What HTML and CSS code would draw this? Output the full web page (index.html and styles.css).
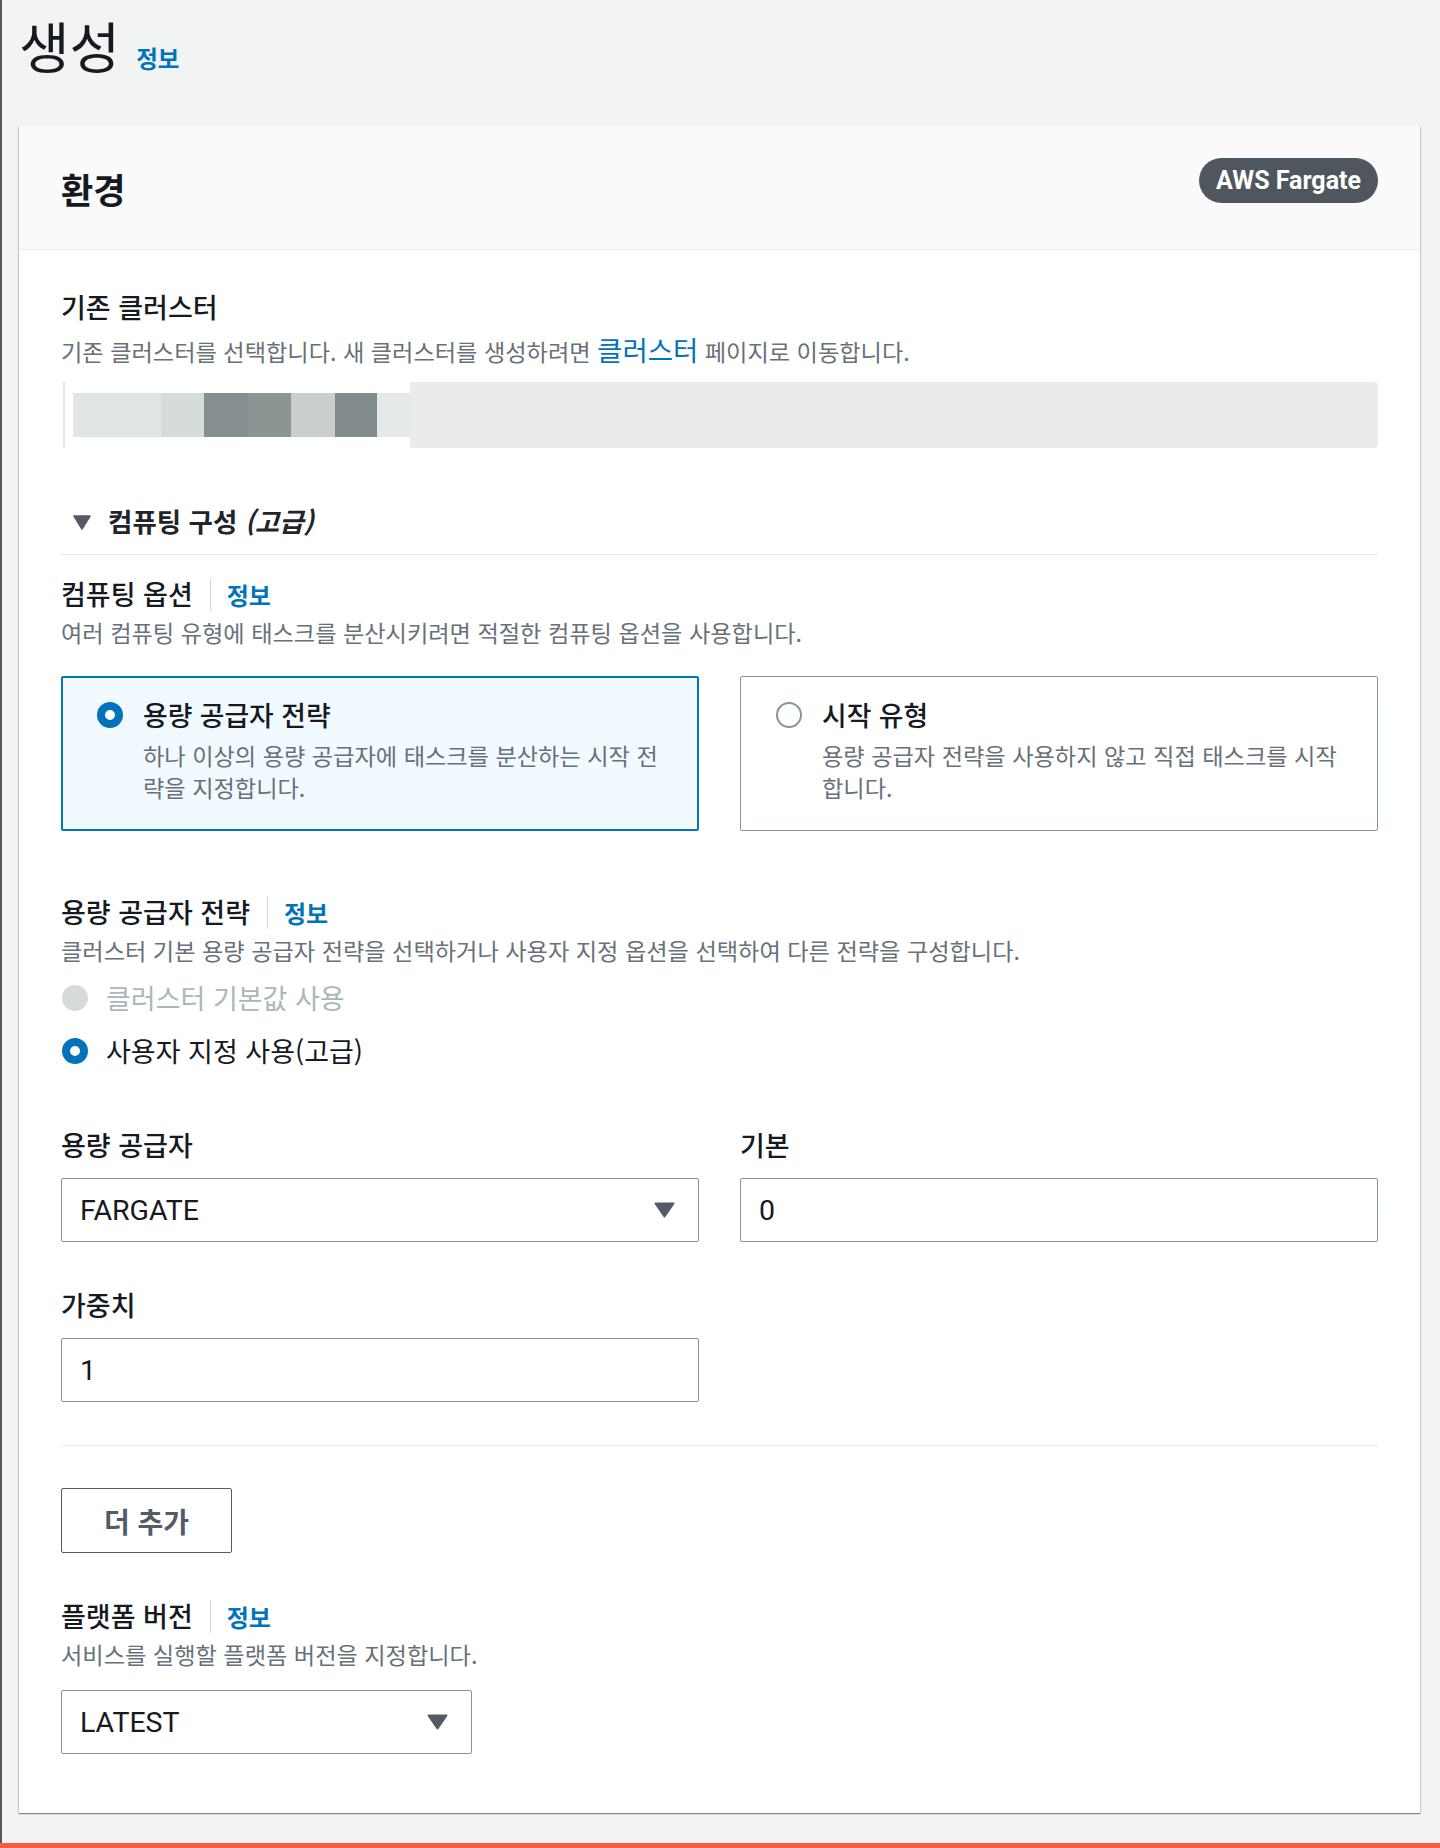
FILE: index.html
```html
<!DOCTYPE html>
<html lang="ko">
<head>
<meta charset="utf-8">
<title>생성</title>
<link rel="stylesheet" href="styles.css">
</head>
<body>
<div class="frame">
  <div class="page-title">
    <h1>생성</h1>
    <a class="title-info">정보</a>
  </div>

  <section class="card">
    <header class="card-header">
      <h2>환경</h2>
      <span class="badge">AWS Fargate</span>
    </header>

    <div class="card-body">
      <div class="label">기존 클러스터</div>
      <p class="desc desc-first">기존 클러스터를 선택합니다. 새 클러스터를 생성하려면 <a class="link">클러스터</a> 페이지로 이동합니다.</p>
      <div class="cluster">
        <div class="cluster-pixels">
          <span class="px px1"></span><span class="px px2"></span><span class="px px3"></span><span class="px px4"></span><span class="px px5"></span><span class="px px6"></span><span class="px px7"></span>
        </div>
        <div class="cluster-field"></div>
      </div>

      <div class="expander">
        <svg class="caret" width="18" height="15" viewBox="0 0 18 15"><polygon points="1,1 17,1 9,14" fill="#545b64" stroke="#545b64" stroke-width="1.5" stroke-linejoin="round"/></svg>
        <span class="expander-title">컴퓨팅 구성 <i>(고급)</i></span>
      </div>

      <div class="label-row first-in-section"><span class="label">컴퓨팅 옵션</span><a class="info">정보</a></div>
      <p class="desc">여러 컴퓨팅 유형에 태스크를 분산시키려면 적절한 컴퓨팅 옵션을 사용합니다.</p>

      <div class="tiles">
        <div class="tile selected">
          <span class="radio on"></span>
          <span class="tile-text">
            <span class="tile-title">용량 공급자 전략</span>
            <span class="tile-desc">하나 이상의 용량 공급자에 태스크를 분산하는 시작 전략을 지정합니다.</span>
          </span>
        </div>
        <div class="tile plain">
          <span class="radio off"></span>
          <span class="tile-text">
            <span class="tile-title">시작 유형</span>
            <span class="tile-desc">용량 공급자 전략을 사용하지 않고 직접 태스크를 시작 합니다.</span>
          </span>
        </div>
      </div>

      <div class="label-row after-tiles"><span class="label">용량 공급자 전략</span><a class="info">정보</a></div>
      <p class="desc">클러스터 기본 용량 공급자 전략을 선택하거나 사용자 지정 옵션을 선택하여 다른 전략을 구성합니다.</p>

      <div class="radio-group">
        <div class="radio-item disabled"><span class="radio dis"></span>클러스터 기본값 사용</div>
        <div class="radio-item"><span class="radio on"></span>사용자 지정 사용(고급)</div>
      </div>

      <div class="field-grid">
        <div class="field">
          <div class="label">용량 공급자</div>
          <div class="input select"><span>FARGATE</span><svg width="21" height="16" viewBox="0 0 21 16"><polygon points="1.5,1.5 19.5,1.5 10.5,14.5" fill="#545b64" stroke="#545b64" stroke-width="2" stroke-linejoin="round"/></svg></div>
        </div>
        <div class="field">
          <div class="label">기본</div>
          <div class="input"><span>0</span></div>
        </div>
        <div class="field">
          <div class="label">가중치</div>
          <div class="input"><span>1</span></div>
        </div>
      </div>

      <div class="divider"></div>

      <button class="btn">더 추가</button>

      <div class="label-row after-btn"><span class="label">플랫폼 버전</span><a class="info">정보</a></div>
      <p class="desc">서비스를 실행할 플랫폼 버전을 지정합니다.</p>
      <div class="input select version"><span>LATEST</span><svg width="21" height="16" viewBox="0 0 21 16"><polygon points="1.5,1.5 19.5,1.5 10.5,14.5" fill="#545b64" stroke="#545b64" stroke-width="2" stroke-linejoin="round"/></svg></div>
    </div>
  </section>
</div>
<div class="footer-bar"></div>
</body>
</html>
```

FILE: styles.css
```css
* { box-sizing: border-box; }

html, body {
  margin: 0;
  padding: 0;
}

body {
  background: #f2f3f3;
  font-family: "Noto Sans CJK KR", "Noto Sans", sans-serif;
  color: #16191f;
}

.frame {
  border-left: 2px solid #555859;
  padding: 14px 20px 30px 17px;
}

/* page title */
.page-title {
  display: flex;
  align-items: baseline;
  height: 60px;
  margin-bottom: 52px;
}

.page-title h1 {
  margin: 0;
  font-size: 55px;
  font-weight: 400;
  line-height: 60px;
  color: #16191f;
}

.title-info {
  margin-left: 16px;
  font-size: 23.5px;
  font-weight: 700;
  line-height: 30px;
  color: #0073bb;
}

/* card */
.card {
  background: #fff;
  box-shadow: 0 1px 1px 0 rgba(0, 28, 36, 0.3), 1px 1px 1px 0 rgba(0, 28, 36, 0.15), -1px 1px 1px 0 rgba(0, 28, 36, 0.15);
}

.card-header {
  height: 124px;
  display: flex;
  justify-content: space-between;
  align-items: flex-start;
  padding: 32px 42px 0 42px;
  background: #fafafa;
  border-bottom: 1px solid #eaeded;
}

.card-header h2 {
  margin: 11px 0 0;
  font-size: 35px;
  font-weight: 700;
  line-height: 40px;
}

.badge {
  height: 45px;
  padding: 0 17px;
  border-radius: 23px;
  background: #50565e;
  color: #fff;
  font-family: Roboto, "Liberation Sans", sans-serif;
  font-weight: 700;
  font-size: 25px;
  line-height: 45px;
}

.card-body {
  padding: 40px 42px 59px;
}

/* labels & descriptions */
.label {
  font-size: 27px;
  font-weight: 500;
  line-height: 34px;
  color: #16191f;
}

.desc {
  margin: 6px 0 0;
  font-size: 23.2px;
  line-height: 30px;
  color: #687078;
}

.desc-first {
  margin-top: 12px;
}

.link {
  color: #0073bb;
  font-size: 27.5px;
  line-height: 20px;
}

.label-row {
  display: flex;
  align-items: center;
}

.info {
  margin-left: 17px;
  padding-left: 16px;
  border-left: 1px solid #d5dbdb;
  font-size: 24px;
  font-weight: 700;
  line-height: 33px;
  color: #0073bb;
}

/* blurred cluster select */
.cluster {
  display: flex;
  height: 66px;
  margin-top: 16px;
}

.cluster-pixels {
  width: 347px;
  margin-left: 2px;
  padding-left: 8px;
  border-left: 2px solid #e3e6e6;
  display: flex;
  align-items: center;
  background: #fff;
}

.px { height: 44px; }
.px1 { width: 88px; background: #e2e5e5; }
.px2 { width: 43px; background: #d6dbdb; }
.px3 { width: 44px; background: #858f8f; }
.px4 { width: 43px; background: #8b9593; }
.px5 { width: 44px; background: #c9cfce; }
.px6 { width: 42px; background: #818b8b; }
.px7 { width: 33px; background: #e6e9e9; }

.cluster-field {
  flex: 1;
  background: #e9ebed;
  border-radius: 0 4px 4px 0;
}

/* expandable section */
.expander {
  display: flex;
  align-items: center;
  margin-top: 55px;
  padding-left: 12px;
  padding-bottom: 15px;
  border-bottom: 1px solid #e4e8e8;
}

.caret {
  margin-right: 17px;
  margin-top: 2px;
}

.expander-title {
  font-size: 26.5px;
  font-weight: 700;
  line-height: 36px;
  color: #1f252b;
}

.expander-title i {
  font-style: italic;
}

.first-in-section { margin-top: 22px; }
.after-tiles { margin-top: 64px; }
.after-btn { margin-top: 46px; }

/* tiles */
.tiles {
  display: grid;
  grid-template-columns: 1fr 1fr;
  column-gap: 41px;
  margin-top: 29px;
}

.tile {
  display: flex;
  align-items: flex-start;
  border-radius: 2px;
}

.tile.selected {
  border: 2px solid #0073bb;
  background: #f1faff;
  padding: 20px 26px 26px 34px;
}

.tile.plain {
  border: 1px solid #879596;
  background: #fff;
  padding: 21px 27px 27px 35px;
}

.tile .radio {
  margin-top: 4px;
  margin-right: 20px;
}

.tile-text {
  display: block;
  flex: 1;
}

.tile-title {
  display: block;
  font-size: 26.8px;
  font-weight: 500;
  line-height: 34px;
}

.tile-desc {
  display: block;
  margin-top: 7px;
  font-size: 23.2px;
  line-height: 32px;
  color: #687078;
}

/* radios */
.radio {
  flex: none;
  display: inline-block;
  width: 26px;
  height: 26px;
  border-radius: 50%;
}

.radio.on {
  border: 8px solid #0073bb;
  background: #fff;
}

.radio.off {
  border: 2px solid #879596;
  background: #fff;
}

.radio.dis {
  background: #d5dbdb;
}

.radio-group {
  display: flex;
  flex-direction: column;
  gap: 19px;
  margin-top: 16px;
}

.radio-item {
  display: flex;
  align-items: center;
  font-size: 27px;
  line-height: 34px;
  color: #16191f;
}

.radio-item .radio {
  margin-left: 1px;
  margin-right: 18px;
}

.radio-item.disabled {
  color: #aab7b8;
}

/* fields */
.field-grid {
  display: grid;
  grid-template-columns: 1fr 1fr;
  column-gap: 41px;
  row-gap: 46px;
  margin-top: 60px;
}

.input {
  height: 64px;
  margin-top: 16px;
  display: flex;
  align-items: center;
  padding: 0 23px 0 18px;
  border: 1px solid #879596;
  border-radius: 2px;
  background: #fff;
  font-family: Roboto, "Liberation Sans", sans-serif;
  font-size: 28.5px;
  color: #16191f;
}

.select {
  justify-content: space-between;
}

.version {
  width: 411px;
  margin-top: 21px;
}

.divider {
  height: 1px;
  margin-top: 43px;
  background: #eaeded;
}

.btn {
  display: flex;
  align-items: center;
  justify-content: center;
  width: 171px;
  height: 65px;
  margin-top: 42px;
  padding: 0;
  border: 1px solid #545b64;
  border-radius: 2px;
  background: #fff;
  font-family: "Noto Sans CJK KR", sans-serif;
  font-size: 28px;
  font-weight: 700;
  color: #545b64;
}

.footer-bar {
  height: 5px;
  background: #f75a45;
}
```
